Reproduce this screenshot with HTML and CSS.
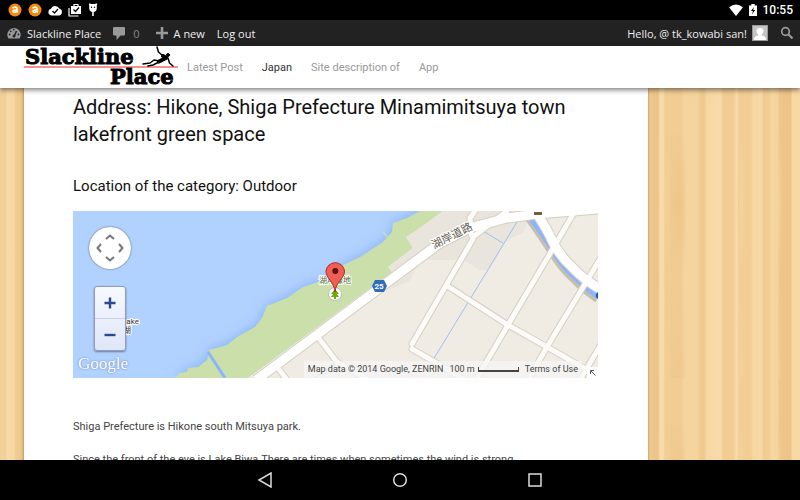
FILE: index.html
```html
<!DOCTYPE html>
<html lang="en">
<head>
    <meta charset="UTF-8">
    <meta name="viewport" content="width=device-width, initial-scale=1.0">
    <title>Slackline Place</title>
    <link rel="stylesheet" href="styles.css">
</head>
<body>
    <div class="status-bar">
        <div class="status-icons">
            <svg class="avast" width="14" height="14" viewBox="0 0 14 14"><circle cx="7" cy="7" r="6.5" fill="#f58a0b"/><path d="M4.5 5.4Q7 3 9 5V9.3M9 7.2Q5 6.6 5 8.4T9 8.4L10 9.4" fill="none" stroke="#fff" stroke-width="1.6"/></svg>
            <svg class="avast" width="14" height="14" viewBox="0 0 14 14"><circle cx="7" cy="7" r="6.5" fill="#f58a0b"/><path d="M4.5 5.4Q7 3 9 5V9.3M9 7.2Q5 6.6 5 8.4T9 8.4L10 9.4" fill="none" stroke="#fff" stroke-width="1.6"/></svg>
            <svg width="14" height="12" viewBox="0 0 14 12"><path d="M3.5 11.5A3.4 3.4 0 0 1 3 4.8 4.4 4.4 0 0 1 11.2 4.6 3.5 3.5 0 0 1 10.8 11.5Z" fill="#fff"/><path d="M4.5 7l2 2 3.5-4" fill="none" stroke="#000" stroke-width="1.2"/></svg>
            <svg width="14" height="14" viewBox="0 0 14 14"><path d="M1 5V13H10.5M6 3V1.5H10V3" fill="none" stroke="#fff" stroke-width="1.2"/><rect x="3" y="3" width="10" height="8" fill="#fff"/><path d="M5.5 6.5l2 2 3.5-4" fill="none" stroke="#000" stroke-width="1.2"/></svg>
            <svg width="10" height="14" viewBox="0 0 10 14"><path d="M1.2 1H8.8V5Q8.8 9 5 9T1.2 5Z" fill="#fff"/><path d="M2 2L1.5.5M8 2L8.5.5M5 8V13" stroke="#fff" stroke-width="1.6"/><circle cx="3.5" cy="4.2" r=".7"/><circle cx="6.5" cy="4.2" r=".7"/></svg>
        </div>
        <div class="status-right">
            <svg width="14" height="12" viewBox="0 0 14 12"><path d="M0 3.2Q7-2 14 3.2L7 12Z" fill="#fff"/></svg>
            <svg width="8" height="12" viewBox="0 0 8 12"><path d="M0 1.5H2.3V0H5.7V1.5H8V12H0Z" fill="#fff"/><path d="M5 3L2 7H4L3 10.5 6.2 6H4.2Z"/></svg>
            <time>10:55</time>
        </div>
    </div>

    <nav class="admin-bar" aria-label="Toolbar">
        <a class="site-link" href="#">
            <svg width="14" height="12" viewBox="0 0 14 12"><path d="M1.5 11.5A6.7 6.7 0 1 1 12.5 11.5Z" fill="#999"/><path d="M7 9.5L9.5 4" stroke="#222" stroke-width="1.6"/><circle cx="7" cy="9" r="1.5" fill="#222"/><g fill="#222"><circle cx="2.6" cy="7.5" r=".9"/><circle cx="3.7" cy="4.3" r=".9"/><circle cx="6.7" cy="2.6" r=".9"/><circle cx="11.4" cy="7.5" r=".9"/></g></svg>
            Slackline Place
        </a>
        <a class="comments-link" href="#">
            <svg width="12" height="13" viewBox="0 0 12 13"><path d="M1 0H11Q12 0 12 1V7.5Q12 8.5 11 8.5H7.5L3.5 13V8.5H1Q0 8.5 0 7.5V1Q0 0 1 0Z" fill="#999"/></svg>
            0
        </a>
        <a class="new-link" href="#">
            <svg width="12" height="12" viewBox="0 0 12 12"><path d="M6 0V12M0 6H12" stroke="#999" stroke-width="2.6"/></svg>
            A new
        </a>
        <a href="#">Log out</a>
        <a class="account" href="#">
            Hello, @ tk_kowabi san!
            <svg width="16" height="16" viewBox="0 0 16 16"><rect width="16" height="16" fill="#999"/><rect x="1" y="1" width="14" height="14" fill="#c5c5c5"/><path d="M2 15Q2 11 6.3 10.5V9.5Q4.5 8 4.5 6 4.5 3 8 3T11.5 6Q11.5 8 9.7 9.5V10.5Q14 11 14 15Z" fill="#fff"/></svg>
        </a>
        <button class="search" type="button" aria-label="Search">
            <svg width="14" height="14" viewBox="0 0 14 14"><circle cx="5.5" cy="5.5" r="3.8" fill="none" stroke="#999" stroke-width="1.7"/><path d="M8.3 8.3L12.5 12.5" stroke="#999" stroke-width="2.2"/></svg>
        </button>
    </nav>

    <header class="site-header">
        <a class="logo" href="#" aria-label="Slackline Place">
            <svg width="156" height="42" viewBox="0 0 156 42">
                <path d="M0 21H154" stroke="#f89090" stroke-width="2"/>
                <text class="logo-text" x="1" y="18">Slackline</text>
                <text class="logo-text" x="86" y="38">Place</text>
                <g fill="none" stroke="#000" stroke-linecap="round" stroke-linejoin="round">
                    <path d="M133 1L134.500 6 139 10M144 12L145.500 17 149 20M119 18L126 17 130 14 135 15M124 20L129 19 135 16" stroke-width="1.500"/>
                    <path d="M139 10L142 12 135 15.500" stroke-width="4"/>
                    <circle cx="144" cy="9" r="1.500" fill="#000"/>
                </g>
            </svg>
        </a>
        <nav class="menu" aria-label="Main menu">
            <a href="#">Latest Post</a>
            <a class="current" href="#">Japan</a>
            <a href="#">Site description of</a>
            <a href="#">App</a>
        </nav>
    </header>

    <main class="page">
        <article class="spot">
            <h1>Address: Hikone, Shiga Prefecture Minamimitsuya town lakefront green space</h1>
            <h2>Location of the category: Outdoor</h2>
            <div class="map">
                <svg class="map-canvas" viewBox="0 0 525 167" preserveAspectRatio="xMinYMin slice">
                    <defs>
                        <filter id="shore" x="-10%" y="-10%" width="120%" height="120%"><feGaussianBlur stdDeviation="6"/></filter>
                    </defs>
                    <rect width="525" height="167" fill="#b1d1ff"/>
                    <path d="M102 167L107 162 114 161 115 157 125 156 134 149 136 139 154 134 164 126 182 116 189 107 194 95 214 87 230 76 254 68 270 54 287 46 310 31 319 21 320 12 334 7 347 0H525V167Z" fill="#83b0f8" filter="url(#shore)"/>
                    <path d="M102 167L107 162 114 161 115 157 125 156 134 149 136 139 154 134 164 126 182 116 189 107 194 95 214 87 230 76 254 68 270 54 287 46 310 31 319 21 320 12 334 7 347 0H525V167Z" fill="#cadfaa"/>
                    <path d="M175 167L319 61 315 56 340 37 333 26 347 17 370 0H525V167Z" fill="#f0ece3"/>
                    <path d="M319 61L315 56 340 37 333 26 347 17 370 0H460L454 12 450 22 440 26 431 32 422 50 414 59 407 59 390 49 347 49 337 70 318 78Z" fill="#e9e4dc"/>
                    <path d="M310 21L315 27" stroke="#cadfaa" stroke-width="1.5"/>
                    <path d="M135 141L152 167" stroke="#8cb4fc" stroke-width="3"/>
                    <path d="M444 11L360 149M410 20L430 32M242 167L267 149" stroke="#9cc0fb" fill="none"/>
                    <path d="M457 7Q470 25 480 41T500 66Q510 77 525 87" stroke="#c4bfae" stroke-width="10" fill="none"/>
                    <path d="M458 8Q471 25 480 40T500 65Q511 76 525 86" stroke="#8cb4fc" stroke-width="5" fill="none"/>
                    <g fill="none" stroke="#d5cfc4" stroke-width="7" stroke-linecap="round">
                        <path d="M402 0L397 7 398 22 400 28 339 133M434 0L400 26M376 76L435 114 474 136 516 160M502 0L435 114 404 167M527 48L474 136 455 169M527 135L507 169M339 138L367 154 390 168M245 126L264 151 294 168M205 157L214 169"/>
                    </g>
                    <path d="M183 169L367 32 397 17 434 7 464 3 525-2" stroke="#d5cfc4" stroke-width="11" fill="none"/>
                    <path d="M464 3Q474 18 480 31T499 56Q510 68 527 78" stroke="#d5cfc4" stroke-width="11" fill="none"/>
                    <g fill="none" stroke="#fcfbf8" stroke-width="5" stroke-linecap="round">
                        <path d="M402 0L397 7 398 22 400 28 339 133M434 0L400 26M376 76L435 114 474 136 516 160M502 0L435 114 404 167M527 48L474 136 455 169M527 135L507 169M339 138L367 154 390 168M245 126L264 151 294 168M205 157L214 169"/>
                    </g>
                    <path d="M183 169L367 32 397 17 434 7 464 3 525-2" stroke="#fff" stroke-width="9" fill="none"/>
                    <path d="M464 3Q474 18 480 31T499 56Q510 68 527 78" stroke="#fff" stroke-width="9" fill="none"/>
                    <rect x="461" y="1" width="8" height="3" fill="#765b3c"/>
                    <path d="M523 83L525 81V88L523 86Z" fill="#1a56b0"/>
                    <g class="map-label">
                        <text x="49" y="113">Lake</text>
                        <text x="50" y="122">湖</text>
                        <text class="park" x="246" y="72">湖岸緑地</text>
                        <text class="road" transform="translate(361 38) rotate(-27)">湖岸道路</text>
                    </g>
                    <path d="M299 75L302 69H311L314 75 311 81H302Z" fill="#316bbd"/>
                    <text class="shield" x="306" y="78">25</text>
                    <circle cx="262" cy="83" r="6.5" fill="#fff" stroke="#bbb"/>
                    <path d="M262 78L266 83H264L266 86H263V88H261V86H258L260 83H258Z" fill="#71a80a"/>
                    <path d="M262 81C261 70 253 68 253 60A9.3 9.3 0 0 1 271.5 60C271.5 68 263 70 262 81Z" fill="#f25e54" stroke="#a53228"/>
                    <circle cx="262.3" cy="60" r="3" fill="#5c1612"/>
                </svg>
                <div class="pan">
                    <button class="up" type="button" aria-label="Pan up"><svg width="10" height="6" viewBox="0 0 10 6"><path d="M1 5L5 1.5 9 5"/></svg></button>
                    <button class="left" type="button" aria-label="Pan left"><svg width="6" height="10" viewBox="0 0 6 10"><path d="M5 1L1.5 5 5 9"/></svg></button>
                    <button class="right" type="button" aria-label="Pan right"><svg width="6" height="10" viewBox="0 0 6 10"><path d="M1 1L4.5 5 1 9"/></svg></button>
                    <button class="down" type="button" aria-label="Pan down"><svg width="10" height="6" viewBox="0 0 10 6"><path d="M1 1L5 4.5 9 1"/></svg></button>
                </div>
                <div class="zoom">
                    <button type="button" aria-label="Zoom in"><svg width="12" height="12" viewBox="0 0 12 12"><path d="M6 .5V11.5M.5 6H11.5"/></svg></button>
                    <button type="button" aria-label="Zoom out"><svg width="12" height="12" viewBox="0 0 12 12"><path d="M.5 6H11.5"/></svg></button>
                </div>
                <a class="google" href="#">Google</a>
                <div class="map-footer">
                    <div class="credits">
                        <span>Map data © 2014 Google, ZENRIN</span>
                        <span class="scale">100 m <i></i></span>
                        <a href="#">Terms of Use</a>
                    </div>
                    <button class="corner" type="button" aria-label="Expand map"><svg width="6" height="6" viewBox="0 0 6 6"><path d="M5.5 5.5L1 1M.5 4V.5H4" fill="none" stroke="#555"/></svg></button>
                </div>
            </div>
            <p>Shiga Prefecture is Hikone south Mitsuya park.</p>
            <p>Since the front of the eye is Lake Biwa.There are times when sometimes the wind is strong.</p>
        </article>
    </main>

    <div class="system-nav">
        <button type="button" aria-label="Back"><svg width="16" height="16" viewBox="0 0 16 16"><path d="M14 1V15L2 8Z"/></svg></button>
        <button type="button" aria-label="Home"><svg width="16" height="16" viewBox="0 0 16 16"><circle cx="8" cy="8" r="6.3"/></svg></button>
        <button type="button" aria-label="Recent apps"><svg width="16" height="16" viewBox="0 0 16 16"><rect x="2" y="2" width="12" height="12"/></svg></button>
    </div>
</body>
</html>
```
FILE: styles.css
```css
* {
    box-sizing: border-box;
}
body {
    margin: 0;
    height: 100vh;
    display: flex;
    flex-direction: column;
    overflow: hidden;
    font-family: Roboto, "Noto Sans CJK JP", sans-serif;
    font-size: 11px;
    color: #444;
    background: #000;
}
a {
    color: inherit;
    text-decoration: none;
}
button {
    padding: 0;
    border: none;
    background: none;
    display: flex;
    align-items: center;
    justify-content: center;
}
svg {
    display: block;
    flex-shrink: 0;
}

/* Android bars */
.status-bar {
    flex: 0 0 20px;
    padding: 0 7px 0 8px;
    display: flex;
    align-items: center;
    justify-content: space-between;
    color: #fff;
}
.status-icons {
    display: flex;
    align-items: center;
    gap: 6px;
}
.status-right {
    display: flex;
    align-items: center;
    gap: 6px;
}
.status-right time {
    font-size: 12px;
    font-weight: 500;
}
.system-nav {
    flex: 0 0 40px;
    display: flex;
    align-items: center;
    justify-content: center;
    gap: 119px;
}
.system-nav path, .system-nav circle, .system-nav rect {
    fill: none;
    stroke: #ddd;
    stroke-width: 1.5;
}

/* WordPress toolbar */
.admin-bar {
    flex: 0 0 26px;
    padding: 0 6px 0 7px;
    display: flex;
    align-items: center;
    gap: 12px;
    background: #222;
    color: #eee;
    font-family: "Open Sans", "Noto Sans", sans-serif;
}
.admin-bar a {
    display: flex;
    align-items: center;
    gap: 6px;
}
.admin-bar .comments-link {
    color: #888;
    gap: 8px;
    margin-right: 4px;
}
.admin-bar .account {
    gap: 5px;
    margin-left: auto;
}

.site-header {
    flex: 0 0 42px;
    padding-left: 24px;
    display: flex;
    align-items: center;
    gap: 7px;
    position: relative;
    z-index: 1;
    background: #fff;
    box-shadow: 0 2px 5px rgba(0,0,0,0.5);
}
.logo svg {
    overflow: visible;
}
.logo-text {
    font-family: "DejaVu Serif", serif;
    font-size: 21px;
    font-weight: bold;
    stroke: #000;
    stroke-width: 1;
}
.menu {
    display: flex;
    gap: 19px;
    color: #999;
}
.menu .current {
    color: #333;
}

/* wood planks behind the page */
.page {
    flex: 1;
    min-height: 0;
    overflow: hidden;
    padding: 0 19% 0 24px;
    position: relative;
    background:
        linear-gradient(90deg, #f2d09a 6px, #f8daa8 7px, #f7d8a4 14px, #f0cb90 16px, #efc98d 20px, #e8be7f 22px, #e8be7f 24px, transparent 24px) no-repeat,
        linear-gradient(270deg, #f8d9a6 8px, #ecc388 9px, #eec78c 21px, #f5d39c 22px, #f7d7a2 29px, #f2ce95 30px, #f1cd93 37px, #f8daa8 38px, #f6d6a1 47px, #f1cd94 49px, #f2ce96 61px, #f9ddac 63px, #f5d49f 65px, #f1cc93 67px, #f1cd94 77px, #f8daa8 79px, #f7d8a5 93px, #efc98d 96px, #f0cb90 100px, #f4d39d 102px, #f5d49e 116px, #f1cc93 119px, #f1cd94 135px, #f9ddad 137px, #f8dba9 140px, #ecc388 142px, #efc98e 151px, #f2cf98 153px);
}
.page::before {
    content: "";
    position: absolute;
    inset: 0;
    background: linear-gradient(270deg, transparent 18px, #f7d8a6 19px, #f7d8a6 22px, transparent 23px, transparent 56px, #f9dcab 57px, #f9dcab 60px, transparent 61px, transparent 52px, #e9be80 53px, #ebc286 60px, transparent 62px, transparent 114px, #e8bb78 116px, #ecc284 129px, #f6d6a2 132px, transparent 140px);
    mask-image: linear-gradient(transparent 15%, rgba(0,0,0,0.4) 40%, transparent 65%, rgba(0,0,0,0.2));
    mask-size: 100% 290px;
}
.spot {
    min-height: 100%;
    padding: 6px 50px 20px 49px;
    position: relative;
    background: #fff;
    box-shadow: 0 0 2px rgba(0,0,0,0.4);
}
.spot h1 {
    margin: 0;
    font-size: 20px;
    font-weight: 400;
    line-height: 27px;
    color: #111;
}
.spot h2 {
    margin: 28px 0 15px;
    font-size: 15px;
    font-weight: 400;
    line-height: 20px;
    color: #111;
}
.spot p {
    margin: 0 0 17px;
    line-height: 16px;
}

.map {
    position: relative;
    height: 167px;
    margin-bottom: 41px;
    overflow: hidden;
}
.map-canvas {
    width: 100%;
    height: 100%;
}
.map-label {
    font-size: 8px;
    fill: #333;
    stroke: #fff;
    stroke-width: 2;
    paint-order: stroke;
}
.map-label .park {
    fill: #4f6b35;
}
.map-label .road {
    font-size: 11px;
    fill: #665f50;
}
.shield {
    font-size: 8px;
    font-weight: bold;
    fill: #fff;
    text-anchor: middle;
}
.pan {
    position: absolute;
    left: 16px;
    top: 16px;
    width: 42px;
    height: 42px;
    padding: 5px;
    display: grid;
    grid-template: repeat(3, 1fr) / repeat(3, 1fr);
    border-radius: 50%;
    background: #fff;
    box-shadow: 0 0 2px rgba(0,0,0,0.6);
}
.pan path {
    fill: none;
    stroke: #777;
    stroke-width: 2;
}
.pan .up {
    grid-area: 1 / 2;
}
.pan .left {
    grid-area: 2 / 1;
}
.pan .right {
    grid-area: 2 / 3;
}
.pan .down {
    grid-area: 3 / 2;
}
.zoom {
    position: absolute;
    left: 21px;
    top: 75px;
    width: 32px;
    height: 65px;
    display: flex;
    flex-direction: column;
    border: 1px solid #8d9cba;
    border-radius: 3px;
    background: linear-gradient(#f7f9ff, #dfe6f7);
    box-shadow: 0 1px 2px rgba(0,0,0,0.4);
}
.zoom button {
    flex: 1;
}
.zoom button + button {
    border-top: 1px solid #c9d4ec;
}
.zoom path {
    stroke: #2b4890;
    stroke-width: 2.4;
}
.google {
    position: absolute;
    left: 5px;
    bottom: 3px;
    font-family: "Liberation Serif", serif;
    font-size: 17px;
    line-height: 22px;
    color: #fff;
    text-shadow: 0 0 2px #5577a5;
}
.map-footer {
    position: absolute;
    right: 0;
    bottom: 0;
    display: flex;
    align-items: flex-end;
    gap: 5px;
    font-size: 9px;
    line-height: 17px;
}
.credits {
    padding: 0 4px;
    display: flex;
    gap: 6px;
    background: rgba(245,245,245,0.75);
}
.scale {
    display: flex;
    align-items: center;
    gap: 3px;
}
.scale i {
    width: 41px;
    height: 5px;
    border: 1px solid #444;
    border-top: none;
    border-bottom-width: 2px;
}
.corner {
    width: 11px;
    height: 11px;
    background: #fff;
}
```
